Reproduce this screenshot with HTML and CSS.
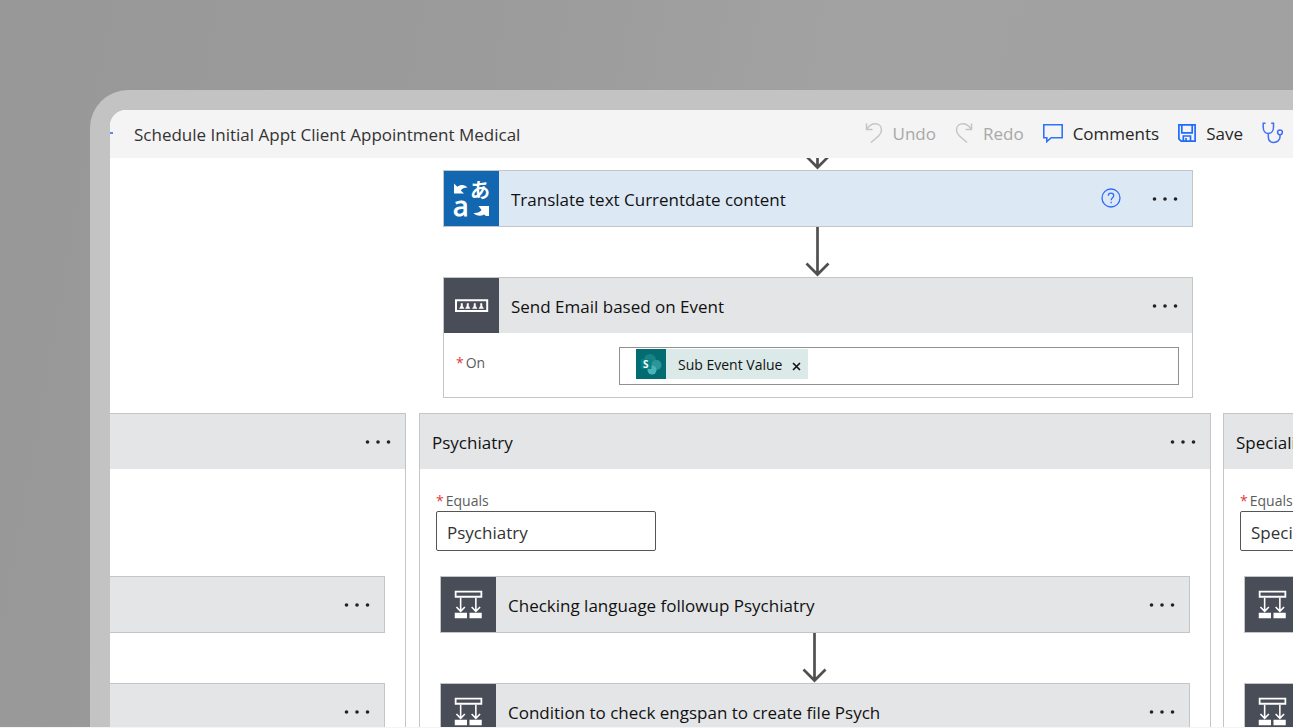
FILE: index.html
```html
<!DOCTYPE html>
<html lang="en">
<head>
<meta charset="utf-8">
<title>Schedule Initial Appt Client Appointment Medical</title>
<link rel="stylesheet" href="styles.css">
</head>
<body>
<svg class="defs" width="0" height="0" aria-hidden="true">
  <symbol id="dots" viewBox="0 0 28 6"><circle cx="3.5" cy="3" r="1.800"/><circle cx="14" cy="3" r="1.800"/><circle cx="24.5" cy="3" r="1.800"/></symbol>
  <symbol id="arrow" viewBox="0 0 26 50"><path d="M12.500 0V48M1.500 36.500L12.500 47.500L23.500 36.500" fill="none" stroke="#505050" stroke-width="2.700"/></symbol>
  <symbol id="switch" viewBox="0 0 56 56">
    <path d="M14.900 14.900h26.200v5.200H14.900z" fill="none" stroke="#fff" stroke-width="1.800"/>
    <path d="M20 21V34M35.500 21V34M15.700 30.500L20 35L24.300 30.500M31.200 30.500L35.500 35L39.800 30.500" fill="none" stroke="#fff" stroke-width="1.600"/>
    <path d="M14 36.500h12.500V42H14zM29 36.500h12.500V42H29z" fill="#fff"/>
  </symbol>
</svg>
<div class="device">
  <div class="screen">
    <header class="topbar">
      <button class="back" type="button" aria-label="Back"><svg width="3" height="4" viewBox="0 0 3 4"><path d="M0 0h3v2H0z" fill="#4f8dfb"/></svg></button>
      <h1 class="flow-name">Schedule Initial Appt Client Appointment Medical</h1>
      <div class="tools">
        <button class="tool" type="button" disabled>
          <svg width="18" height="22" viewBox="0 0 18 22" fill="none" stroke="#c4c4c4" stroke-width="1.500"><path d="M1.500 1.500V7.500H7.500M1.800 7.200C4 4 6.500 1.800 10 1.800C14 1.800 16.500 4.500 16.500 8C16.500 10.500 15.500 12 13.500 14L6 20.500"/></svg>
          Undo</button>
        <button class="tool" type="button" disabled>
          <svg width="18" height="22" viewBox="0 0 18 22" fill="none" stroke="#c4c4c4" stroke-width="1.500"><path d="M16.500 1.500V7.500H10.500M16.200 7.200C14 4 11.500 1.800 8 1.800C4 1.800 1.500 4.500 1.500 8C1.500 10.500 2.500 12 4.500 14L12 20.500"/></svg>
          Redo</button>
        <button class="tool" type="button">
          <svg width="20" height="20" viewBox="0 0 20 20" fill="none" stroke="#2f72fb" stroke-width="1.600"><path d="M.8 1.800H19.200V14.700H8.200L3.800 18.600V14.700H.8Z"/></svg>
          Comments</button>
        <button class="tool" type="button">
          <svg width="18" height="18" viewBox="0 0 18 18" fill="none" stroke="#1f6bfb" stroke-width="1.700"><path d="M.9.900H17.100V17.100H3.200L.9 14.800ZM3.800 1V8.800H14.200V1M5.300 17V12H12.500V17M8 14V17"/></svg>
          Save</button>
        <button class="tool" type="button" aria-label="Flow checker">
          <svg width="21" height="22" viewBox="0 0 21 22" fill="none" stroke="#3f6df8" stroke-width="1.500"><path d="M3.500 1.200H1.200V5C1.200 9 3.500 11.500 6.300 11.500S11.500 9 11.500 5V1.200H9.200M6.300 11.500V14.500C6.300 18.500 8.500 20.500 11.800 20.500S18 18 18 15V13"/><circle cx="18" cy="10.300" r="2.400"/></svg>
        </button>
      </div>
    </header>

    <main class="canvas">
      <section class="trunk">
        <div class="connector connector-cut"><svg width="26" height="50"><use href="#arrow"/></svg></div>
        <article class="card card-blue">
          <div class="card-head">
            <svg class="badge badge-blue" viewBox="0 0 55 55" aria-hidden="true">
              <text x="26" y="27" class="glyph-ja">あ</text>
              <text x="9" y="45" class="glyph-a">a</text>
              <path d="M10 12.500V22.500H20L16.800 19.500C18 17.500 20.500 16.500 23.500 16.600C21 13.200 16.500 13.200 13.300 15.700Z" fill="#fff"/>
              <path d="M45 35V45H42L40 43.500C37 45.500 32 45 29.500 42C33 42.500 36 41 37.500 39L34.500 35Z" fill="#fff"/>
            </svg>
            <h2 class="card-title">Translate text Currentdate content</h2>
            <button class="icon-button" type="button" aria-label="Help"><svg width="20" height="22" viewBox="0 0 20 22" fill="none" stroke="#2f6bfb" stroke-width="1.300"><circle cx="10" cy="10" r="9"/><path d="M7.300 7.800C7.300 6 8.400 5.200 10 5.200S12.700 6.200 12.700 7.700C12.700 9.800 10.200 9.800 10.200 12.300M10.200 13.800V15.200"/></svg></button>
            <button class="icon-button more" type="button" aria-label="More"><svg width="28" height="6"><use href="#dots"/></svg></button>
          </div>
        </article>
        <div class="connector"><svg width="26" height="50"><use href="#arrow"/></svg></div>
        <article class="card">
          <div class="card-head">
            <svg class="badge" viewBox="0 0 55 55" aria-hidden="true">
              <path d="M12 22.300H43.200V33H12Z" fill="none" stroke="#fff" stroke-width="2"/>
              <path d="M15.500 30.500L17 28V25.500H18.500V28L20 30.500ZM21.500 30.500L23 28V25.500H24.500V28L26 30.500ZM28.500 30.500L30 28V25.500H31.500V28L33 30.500ZM35 30.500L36.500 28V25.500H38V28L39.500 30.500Z" fill="#fff" stroke="#fff" stroke-width=".5"/>
            </svg>
            <h2 class="card-title">Send Email based on Event</h2>
            <button class="icon-button more" type="button" aria-label="More"><svg width="28" height="6"><use href="#dots"/></svg></button>
          </div>
          <div class="card-body">
            <span class="label" id="on-label"><span class="star">*</span>On</span>
            <div class="token-box" role="group" aria-labelledby="on-label">
              <span class="token">
                <svg width="30" height="30" viewBox="0 0 30 30" aria-hidden="true"><path d="M0 0h30v30H0z" fill="#036c70"/><circle cx="14" cy="11" r="6" fill="#1a8287"/><circle cx="20.500" cy="16" r="5" fill="#2b959a"/><circle cx="16" cy="21" r="4.500" fill="#48b4ba"/><path d="M5 10h10.500v10H5z" fill="#058286"/><text x="7" y="19" class="sp-s">S</text></svg>
                <span class="token-name">Sub Event Value</span>
                <button class="token-x" type="button" aria-label="Remove"><svg width="9" height="9" viewBox="0 0 9 9"><path d="M1 1L8 8M8 1L1 8" stroke="#111" stroke-width="1.600"/></svg></button>
              </span>
            </div>
          </div>
        </article>
      </section>

      <section class="cases">
        <div class="case case-left">
          <div class="case-head"><button class="icon-button more" type="button" aria-label="More"><svg width="28" height="6"><use href="#dots"/></svg></button></div>
          <div class="case-body">
            <div class="field"></div>
            <article class="card"><div class="card-head"><button class="icon-button more" type="button" aria-label="More"><svg width="28" height="6"><use href="#dots"/></svg></button></div></article>
            <div class="connector"></div>
            <article class="card"><div class="card-head"><button class="icon-button more" type="button" aria-label="More"><svg width="28" height="6"><use href="#dots"/></svg></button></div></article>
          </div>
        </div>
        <div class="case case-main">
          <div class="case-head"><h2 class="card-title">Psychiatry</h2><button class="icon-button more" type="button" aria-label="More"><svg width="28" height="6"><use href="#dots"/></svg></button></div>
          <div class="case-body">
            <div class="field"><label class="label" for="eq1"><span class="star">*</span>Equals</label><input class="text-input" id="eq1" type="text" value="Psychiatry"></div>
            <article class="card"><div class="card-head"><svg class="badge" aria-hidden="true"><use href="#switch"/></svg><h3 class="card-title">Checking language followup Psychiatry</h3><button class="icon-button more" type="button" aria-label="More"><svg width="28" height="6"><use href="#dots"/></svg></button></div></article>
            <div class="connector"><svg width="26" height="50"><use href="#arrow"/></svg></div>
            <article class="card"><div class="card-head"><svg class="badge" aria-hidden="true"><use href="#switch"/></svg><h3 class="card-title">Condition to check engspan to create file Psych</h3><button class="icon-button more" type="button" aria-label="More"><svg width="28" height="6"><use href="#dots"/></svg></button></div></article>
          </div>
        </div>
        <div class="case case-right">
          <div class="case-head"><h2 class="card-title">Speciali</h2></div>
          <div class="case-body">
            <div class="field"><label class="label" for="eq2"><span class="star">*</span>Equals</label><input class="text-input" id="eq2" type="text" value="Speci"></div>
            <article class="card"><div class="card-head"><svg class="badge" aria-hidden="true"><use href="#switch"/></svg></div></article>
            <div class="connector"></div>
            <article class="card"><div class="card-head"><svg class="badge" aria-hidden="true"><use href="#switch"/></svg></div></article>
          </div>
        </div>
      </section>
    </main>
  </div>
</div>
</body>
</html>
```
FILE: styles.css
```css
* { box-sizing: border-box; }

body {
  margin: 0;
  height: 100vh;
  padding: 90px 0 0 90px;
  border-bottom: 1px solid #f4f4f4;
  display: flex;
  overflow: hidden;
  background: linear-gradient(100deg, #989898 0%, #9b9b9b 35%, #a2a2a2 60%, #a0a0a0 100%);
  font-family: "Open Sans", "Noto Sans", "Noto Sans CJK JP", sans-serif;
  font-size: 17px;
  color: #111;
}

h1, h2, h3 { margin: 0; font-size: 17px; font-weight: 400; }

button {
  border: 0;
  padding: 0;
  background: none;
  font: inherit;
  color: inherit;
}

svg { display: block; flex: none; }
.defs { position: absolute; }

.device {
  flex: 1;
  min-width: 0;
  display: flex;
  padding: 20px 0 0 20px;
  border-top-left-radius: 38px;
  background: #c3c3c3;
}

.screen {
  flex: 1;
  min-width: 0;
  overflow: hidden;
  border-top-left-radius: 16px;
  background: #fff;
}

.topbar {
  display: flex;
  align-items: center;
  height: 48px;
  padding-right: 10px;
  background: #f4f4f4;
}

.back { width: 24px; }
.flow-name { flex: 1; min-width: 0; color: #333; white-space: nowrap; }
.tools { display: flex; gap: 19px; padding-bottom: 2px; }
.tool { display: flex; align-items: center; gap: 10px; color: #262626; }
.tool:disabled { color: #a8a8a8; }

.trunk { padding: 0 100px 0 333px; }

.connector { display: flex; justify-content: center; height: 50px; }
.connector-cut { height: 12px; overflow: hidden; align-items: flex-end; }

.card { border: 1px solid #c4c5c7; background: #fff; }

.card-head,
.case-head {
  display: flex;
  align-items: center;
  gap: 12px;
  height: 55px;
  background: #e4e5e7;
}
.card-head { padding-right: 13px; }
.card-blue .card-head { background: #dde8f5; }
.badge { width: 55px; height: 55px; background: #484d58; }
.badge-blue { background: #1267b0; }
.card-title { flex: 1; min-width: 0; padding-top: 2px; white-space: nowrap; }
.icon-button + .icon-button { margin-left: 18px; }
.more { margin-left: auto; fill: #222; }

.glyph-ja { font: 700 20px "Noto Sans CJK JP", sans-serif; fill: #fff; }
.glyph-a { font: 400 28px "Open Sans", sans-serif; fill: #fff; stroke: #fff; }
.sp-s { font: 700 10px "Open Sans", sans-serif; fill: #fff; }

.card-body {
  display: flex;
  align-items: flex-start;
  padding: 14px 13px 12px 12px;
}
.label { font-size: 14px; line-height: 20px; color: #5c5c5c; white-space: nowrap; }
.star { margin-right: 2px; color: #e03a3a; }
.card-body .label { width: 163px; padding-top: 6px; }
.token-box {
  flex: 1;
  height: 38px;
  padding: 1px 16px;
  border: 1px solid #919191;
}
.token {
  display: inline-flex;
  align-items: center;
  height: 30px;
  padding-right: 7px;
  background: #dbe9e9;
  font-size: 14px;
  color: #111;
}
.token-name { padding: 0 10px 0 12px; }
.token-x { padding-top: 4px; }

.cases { display: flex; gap: 12px; padding-top: 15px; }
.case { border: 1px solid #c4c5c7; height: 400px; overflow: hidden; }
.case-left { flex: 0 0 296px; border-left: 0; }
.case-main { flex: 1; min-width: 0; margin-left: 1px; }
.case-right { flex: 0 0 70px; border-right: 0; }
.case-head { padding: 0 13px 0 12px; }
.case-body { padding: 0 20px; }
.case-left .case-body { padding-left: 0; }
.case-left .card { border-left: 0; }
.case-right .case-head { padding-right: 0; }
.case-right .case-body { padding-right: 0; }
.case-right .card { border-right: 0; }

.field {
  display: flex;
  flex-direction: column;
  height: 107px;
  margin-left: -4px;
  padding-top: 22px;
}
.text-input {
  width: 220px;
  height: 40px;
  padding: 2px 10px 0;
  border: 1px solid #555;
  border-radius: 2px;
  background: #fff;
  font: inherit;
  color: #333;
}
```
